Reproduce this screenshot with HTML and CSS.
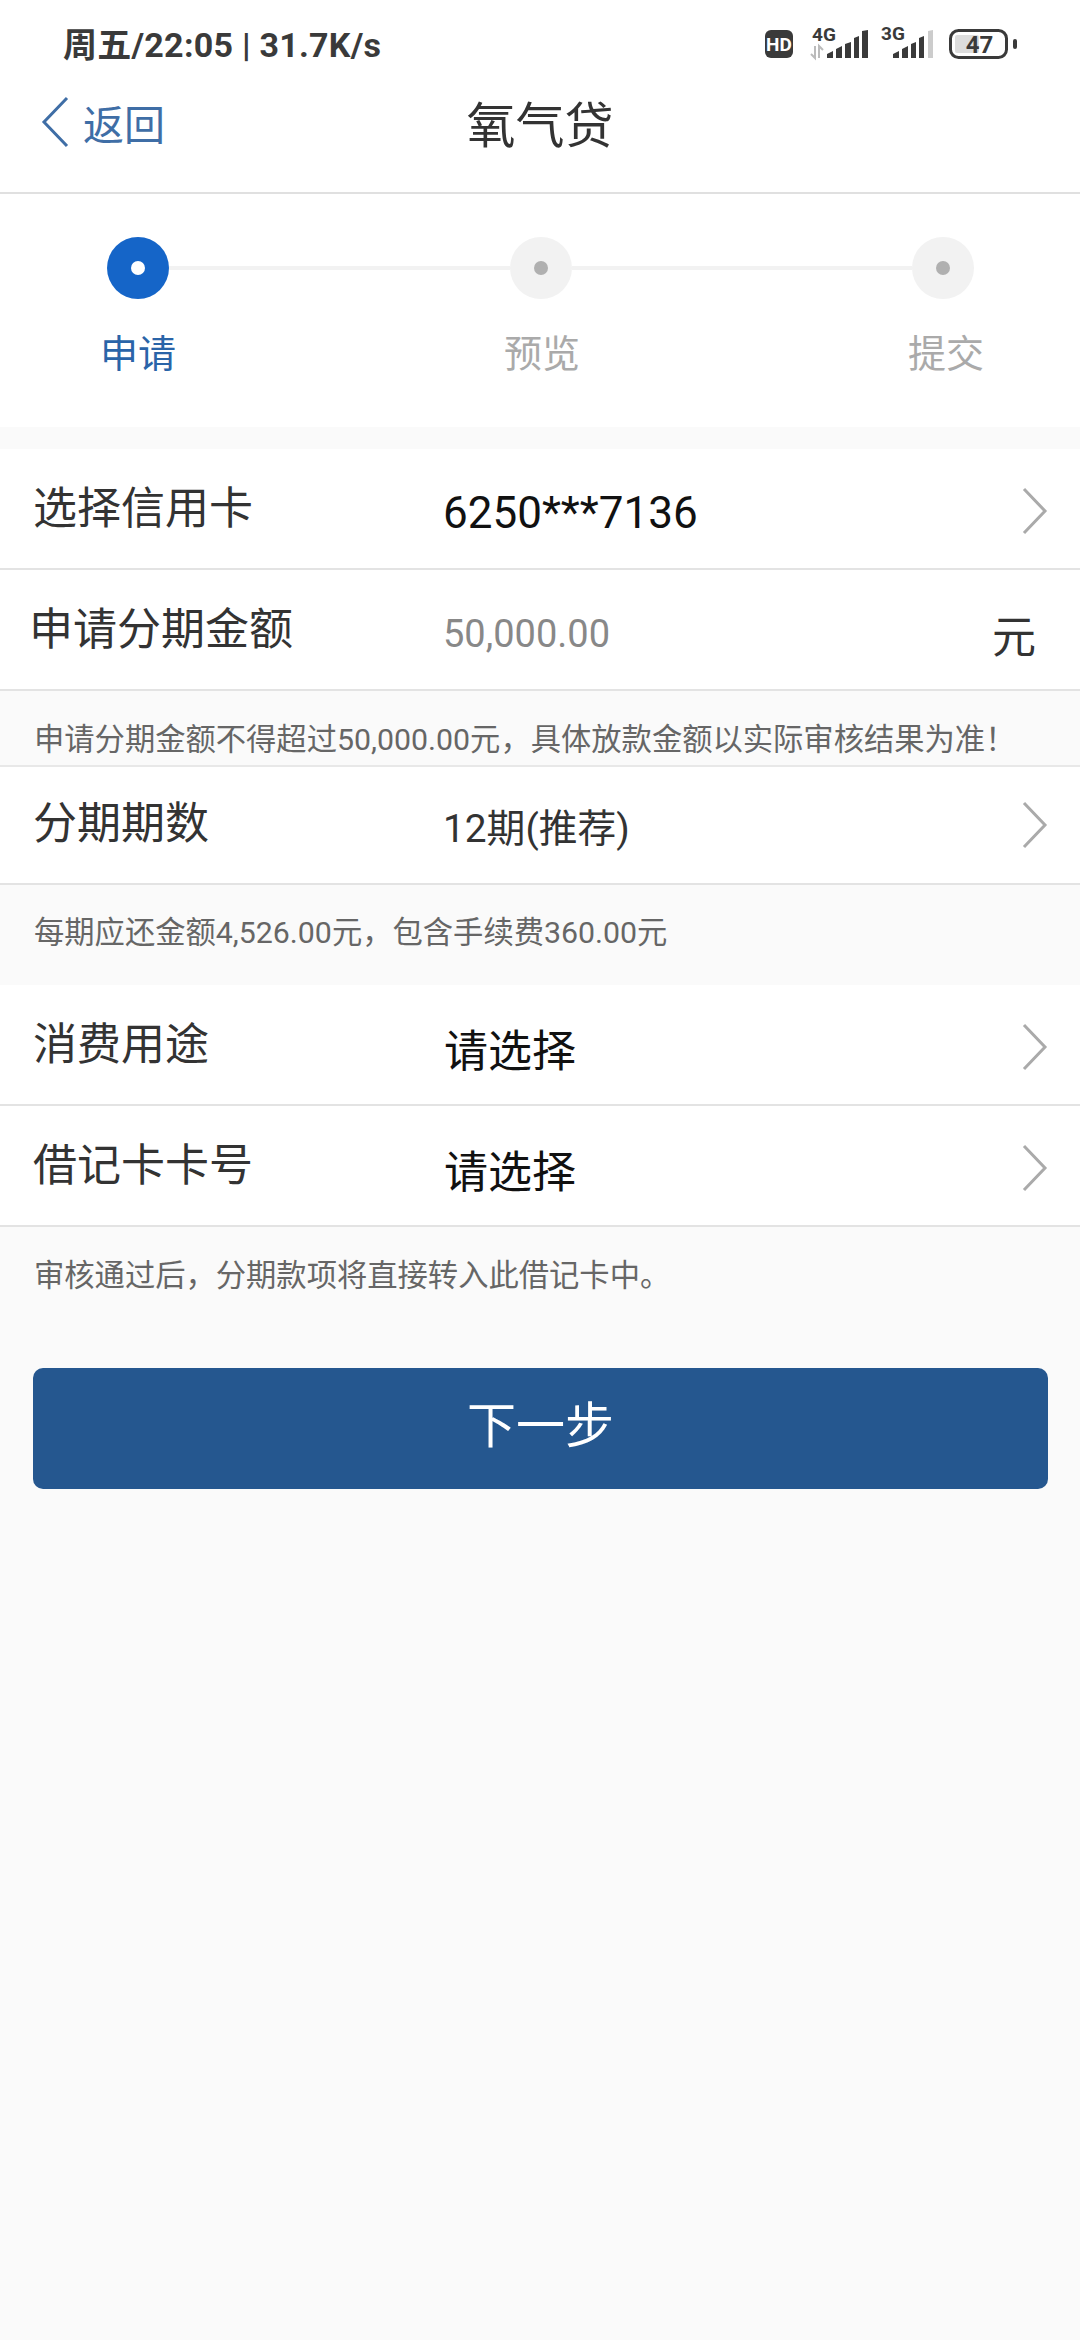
FILE: index.html
```html
<!DOCTYPE html>
<html lang="zh-CN">
<head>
  <meta charset="UTF-8" />
  <meta name="viewport" content="width=device-width, initial-scale=1.0"/>
  <title>氧气贷</title>
  <link rel="stylesheet" href="styles.css">
</head>
<body>

  <!-- 状态栏 -->
  <div class="statusbar">
    <span class="status-text">周五/22:05 | 31.7K/s</span>
    <svg class="status-icons" width="260" height="46" viewBox="0 -6 260 46">
      <rect x="0" y="6" width="28" height="28" rx="6" fill="#3a3a3a"/>
      <text x="14" y="26.5" class="svg-hd">HD</text>
      <text x="47" y="17" class="svg-net">4G</text>
      <path d="M50 22v12l-4-4M54 34V22l4 4" fill="none" stroke="#bbb" stroke-width="2"/>
      <path d="M62 30l6-3v7h-6zM71 25l6-3v12h-6zM80 20l6-2v16h-6zM89 14l5-2v22h-5zM97 7l6-1v28h-6z" fill="#3a3a3a"/>
      <text x="116" y="16" class="svg-net">3G</text>
      <path d="M128 30l6-3v7h-6zM137 25l6-3v12h-6zM146 20l5-2v16h-5zM154 14l5-2v22h-5z" fill="#3a3a3a"/>
      <path d="M163 7l5-1v28h-5z" fill="#ccc"/>
      <rect x="185.5" y="6.5" width="56" height="27" rx="8" fill="none" stroke="#3a3a3a" stroke-width="3"/>
      <rect x="190" y="11" width="24" height="18" rx="2" fill="#ddd"/>
      <text x="214.5" y="29" class="svg-batt">47</text>
      <rect x="248" y="15" width="4" height="10" rx="2" fill="#3a3a3a"/>
    </svg>
  </div>

  <!-- 导航 -->
  <header class="nav">
    <a class="back">
      <svg width="28" height="52" viewBox="0 0 28 52"><path d="M26 2L3 26l23 24" fill="none" stroke="#3f6ea6" stroke-width="3"/></svg>
      <span>返回</span>
    </a>
    <h1>氧气贷</h1>
  </header>

  <!-- 步骤 -->
  <section class="steps">
    <div class="step-track">
      <span class="dot active"></span>
      <span class="line"></span>
      <span class="dot"></span>
      <span class="line"></span>
      <span class="dot"></span>
    </div>
    <div class="step-labels">
      <span class="active">申请</span>
      <span>预览</span>
      <span>提交</span>
    </div>
  </section>

  <!-- 表单 -->
  <div class="row first">
    <span class="label">选择信用卡</span>
    <span class="value card">6250***7136</span>
    <svg class="arrow" width="26" height="48" viewBox="0 0 26 48"><path d="M2 2l21 22L2 46" fill="none" stroke="#aaa" stroke-width="3"/></svg>
  </div>
  <div class="row">
    <span class="label wide">申请分期金额</span>
    <span class="value amount">50,000.00</span>
    <span class="unit">元</span>
  </div>
  <p class="hint">申请分期金额不得超过50,000.00元，具体放款金额以实际审核结果为准！</p>
  <div class="row top-line">
    <span class="label">分期期数</span>
    <span class="value period">12期(推荐)</span>
    <svg class="arrow" width="26" height="48" viewBox="0 0 26 48"><path d="M2 2l21 22L2 46" fill="none" stroke="#aaa" stroke-width="3"/></svg>
  </div>
  <p class="hint tall">每期应还金额4,526.00元，包含手续费360.00元</p>
  <div class="row">
    <span class="label">消费用途</span>
    <span class="value pick">请选择</span>
    <svg class="arrow" width="26" height="48" viewBox="0 0 26 48"><path d="M2 2l21 22L2 46" fill="none" stroke="#aaa" stroke-width="3"/></svg>
  </div>
  <div class="row">
    <span class="label">借记卡卡号</span>
    <span class="value pick">请选择</span>
    <svg class="arrow" width="26" height="48" viewBox="0 0 26 48"><path d="M2 2l21 22L2 46" fill="none" stroke="#aaa" stroke-width="3"/></svg>
  </div>
  <p class="hint last">审核通过后，分期款项将直接转入此借记卡中。</p>

  <button class="next">下一步</button>

</body>
</html>
```

FILE: styles.css
```css
body {
  margin: 0;
  min-height: 2340px;
  background: #fafafa;
  font-family: Roboto, "Noto Sans CJK SC", sans-serif;
  color: #333;
}

.statusbar {
  height: 76px;
  background: #fff;
  display: flex;
  align-items: center;
  justify-content: space-between;
  padding: 8px 55px 0 63px;
  box-sizing: border-box;
}

.status-text {
  font-size: 34px;
  font-weight: 700;
  letter-spacing: 0.25px;
  color: #3a3a3a;
  white-space: nowrap;
}

.status-icons {
  display: block;
  margin-top: -2px;
}

.svg-hd { font: 700 19px Roboto, sans-serif; fill: #fff; text-anchor: middle; }
.svg-net { font: 700 19px Roboto, sans-serif; fill: #3a3a3a; }
.svg-batt { font: 700 24px Roboto, sans-serif; fill: #3a3a3a; text-anchor: middle; }

.nav {
  height: 91px;
  background: #fff;
  border-bottom: 2px solid #e0e0e0;
  display: grid;
  grid-template-columns: 1fr auto 1fr;
  align-items: center;
  padding: 0 0 25px 0;
}

.back {
  display: flex;
  align-items: center;
  gap: 14px;
  padding-left: 41px;
  color: #3f6ea6;
  font-size: 41px;
}

.nav h1 {
  margin: 0;
  font-size: 49px;
  font-weight: 400;
  color: #333;
}

.steps {
  background: #fff;
  height: 233px;
  padding-top: 43px;
  box-sizing: border-box;
}

.step-track {
  display: flex;
  align-items: center;
  padding: 0 106px 0 107px;
}

.dot {
  width: 62px;
  height: 62px;
  border-radius: 50%;
  background: #f2f2f2;
  display: flex;
  align-items: center;
  justify-content: center;
  flex: none;
}

.dot::after {
  content: "";
  width: 14px;
  height: 14px;
  border-radius: 50%;
  background: #b0b0b0;
}

.dot.active { background: #1565c8; }
.dot.active::after { background: #fff; }

.line {
  flex: 1;
  height: 4px;
  background: #f2f2f2;
}

.step-labels {
  display: flex;
  justify-content: space-between;
  padding: 0 96px 0 100px;
  margin-top: 28px;
  font-size: 38px;
  line-height: 54px;
  color: #aaa;
}

.step-labels .active { color: #2a64a8; }

.row {
  height: 119px;
  background: #fff;
  border-bottom: 2px solid #e3e3e3;
  display: flex;
  align-items: center;
  padding: 0 32px 0 33px;
}

.row.first { margin-top: 22px; }
.row.top-line { border-top: 2px solid #e8e8e8; height: 116px; }
.row.top-line .label { margin-bottom: 10px; }
.row.top-line .arrow { margin-top: 0; }

.label {
  width: 410px;
  flex: none;
  font-size: 44px;
  margin-bottom: 8px;
  color: #333;
  white-space: nowrap;
}

.label.wide { margin-left: -4px; width: 414px; }

.value {
  flex: 1;
  padding-top: 8px;
  white-space: nowrap;
}

.card { font-size: 44px; color: #111; }
.amount { font-size: 38px; color: #888; }
.period { font-size: 38.8px; color: #333; padding-top: 0; }
.pick { font-size: 44px; color: #111; padding-top: 6px; margin-left: 1px; }

.unit {
  font-size: 44px;
  color: #333;
  margin-right: 12px;
  padding-top: 8px;
}

.arrow {
  flex: none;
  margin-top: 4px;
}

.hint {
  margin: 0;
  padding: 0 34px;
  height: 74px;
  line-height: 98px;
  font-size: 30.3px;
  color: #666;
  white-space: nowrap;
}

.hint.tall { height: 100px; line-height: 96px; }
.hint.last { line-height: 97px; }

.next {
  display: block;
  width: 1015px;
  height: 121px;
  margin: 67px 0 0 33px;
  padding: 0 0 14px;
  border: none;
  border-radius: 10px;
  background: #25578f;
  color: #fff;
  font-family: inherit;
  font-size: 49px;
}
```
